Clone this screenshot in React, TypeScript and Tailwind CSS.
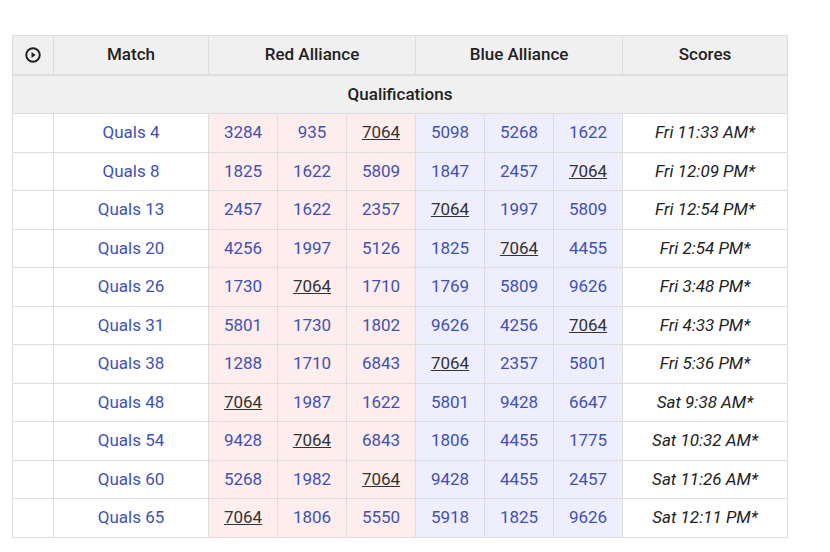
import React from "react";

const rows: [string, string[], string[], string][] = [
  ["Quals 4", ["3284", "935", "7064"], ["5098", "5268", "1622"], "Fri 11:33 AM*"],
  ["Quals 8", ["1825", "1622", "5809"], ["1847", "2457", "7064"], "Fri 12:09 PM*"],
  ["Quals 13", ["2457", "1622", "2357"], ["7064", "1997", "5809"], "Fri 12:54 PM*"],
  ["Quals 20", ["4256", "1997", "5126"], ["1825", "7064", "4455"], "Fri 2:54 PM*"],
  ["Quals 26", ["1730", "7064", "1710"], ["1769", "5809", "9626"], "Fri 3:48 PM*"],
  ["Quals 31", ["5801", "1730", "1802"], ["9626", "4256", "7064"], "Fri 4:33 PM*"],
  ["Quals 38", ["1288", "1710", "6843"], ["7064", "2357", "5801"], "Fri 5:36 PM*"],
  ["Quals 48", ["7064", "1987", "1622"], ["5801", "9428", "6647"], "Sat 9:38 AM*"],
  ["Quals 54", ["9428", "7064", "6843"], ["1806", "4455", "1775"], "Sat 10:32 AM*"],
  ["Quals 60", ["5268", "1982", "7064"], ["9428", "4455", "2457"], "Sat 11:26 AM*"],
  ["Quals 65", ["7064", "1806", "5550"], ["5918", "1825", "9626"], "Sat 12:11 PM*"],
];

const td = "border border-[#dddddd] text-center p-0";

export default function App() {
  return (
    <div className="w-[830px] h-[552px] bg-white pt-[35px] pl-[12px]" style={{ fontFamily: "Roboto, sans-serif" }}>
      <table className="border-collapse text-[17px] w-[775px] table-fixed">
        <colgroup>
          <col className="w-[41px]" />
          <col className="w-[155px]" />
          <col className="w-[69px]" /><col className="w-[69px]" /><col className="w-[69px]" />
          <col className="w-[69px]" /><col className="w-[69px]" /><col className="w-[69px]" />
          <col className="w-[165px]" />
        </colgroup>
        <thead>
          <tr className="h-[39px] bg-[#f0f0f0] text-[#222] font-medium">
            <th className={`${td} border-b-2`}>
              <svg width="18" height="18" viewBox="0 0 24 24" className="mx-auto">
                <circle cx="12" cy="12" r="9" fill="none" stroke="#222" strokeWidth="2.6" />
                <path d="M10 8 L15.5 12 L10 16 Z" fill="#222" />
              </svg>
            </th>
            <th className={`${td} border-b-2 font-medium`}>Match</th>
            <th colSpan={3} className={`${td} border-b-2 font-medium`}>Red Alliance</th>
            <th colSpan={3} className={`${td} border-b-2 font-medium`}>Blue Alliance</th>
            <th className={`${td} border-b-2 font-medium`}>Scores</th>
          </tr>
        </thead>
        <tbody>
          <tr className="h-[39px] bg-[#f0f0f0]">
            <td colSpan={9} className={`${td} font-medium text-[#222]`}>Qualifications</td>
          </tr>
          {rows.map(([m, r, b, s]) => (
            <tr key={m} className="h-[38.5px]">
              <td className={td}></td>
              <td className={`${td} text-[#3f51b5]`}>{m}</td>
              {r.map((t, i) => (
                <td key={"r" + i} className={`${td} bg-[#fdeded] text-[#3f51b5]`}>
                  <span className={t === "7064" ? "underline text-[#333]" : ""}>{t}</span>
                </td>
              ))}
              {b.map((t, i) => (
                <td key={"b" + i} className={`${td} bg-[#eeeefd] text-[#3f51b5]`}>
                  <span className={t === "7064" ? "underline text-[#333]" : ""}>{t}</span>
                </td>
              ))}
              <td className={`${td} italic text-[#222]`}>{s}</td>
            </tr>
          ))}
        </tbody>
      </table>
    </div>
  );
}
